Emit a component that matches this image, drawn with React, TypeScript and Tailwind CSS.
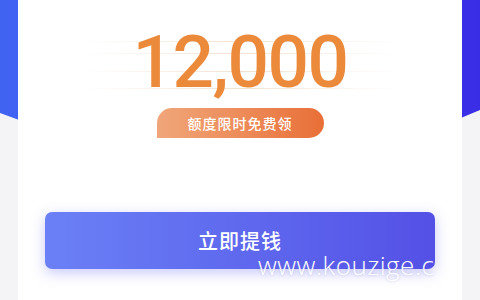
export default function App() {
  const lines = ['top-[41px]', 'top-[53px]', 'top-[71px]', 'top-[88px]'];
  return (
    <div className="relative w-[480px] h-[300px] overflow-hidden bg-[#f4f4f7] font-['Noto_Sans_CJK_SC',sans-serif]">
      {/* blue header behind the card */}
      <div className="absolute inset-x-0 top-0 h-[120px] bg-gradient-to-r from-[#4163f2] to-[#3a2de6] [clip-path:polygon(0_0,100%_0,100%_110px,96%_118px,4%_120px,0_113px)]" />

      <div className="relative flex h-full px-[18px]">
        <div className="relative flex flex-1 flex-col items-center bg-white">
          {/* faint rules behind the amount */}
          {lines.map((t) => (
            <div
              key={t}
              className={`absolute left-[67px] right-[65px] h-px ${t} bg-gradient-to-r from-transparent via-[#f3e2d0] to-transparent`}
            />
          ))}

          <div className="relative mt-[24px] h-[76px] font-['Roboto',sans-serif] text-[73px] leading-[76px] font-medium tracking-[-1.5px] text-[#ec8a3c]">
            12,000
          </div>

          <div className="relative mt-[8px] flex h-[30px] w-[167px] items-center justify-center rounded-full rounded-bl-[4px] bg-gradient-to-r from-[#f0a679] to-[#e86f36] text-[14px] font-medium tracking-[1px] text-white">
            额度限时免费领
          </div>

          <button className="mt-[74px] flex h-[57px] w-[390px] items-center justify-center rounded-[7px] bg-gradient-to-r from-[#6b80f6] to-[#5450e6] text-[20px] font-medium tracking-[1px] text-white shadow-[0_4px_14px_rgba(100,100,240,0.35)]">
            立即提钱
          </button>
        </div>
      </div>

      {/* watermark */}
      <div className="absolute left-[258px] top-[246px] whitespace-nowrap font-['Open_Sans',sans-serif] text-[26px] font-light tracking-[0.5px] text-white [text-shadow:0_0_3px_rgba(120,120,200,0.4)]">
        www.kouzige.c
      </div>
    </div>
  );
}
